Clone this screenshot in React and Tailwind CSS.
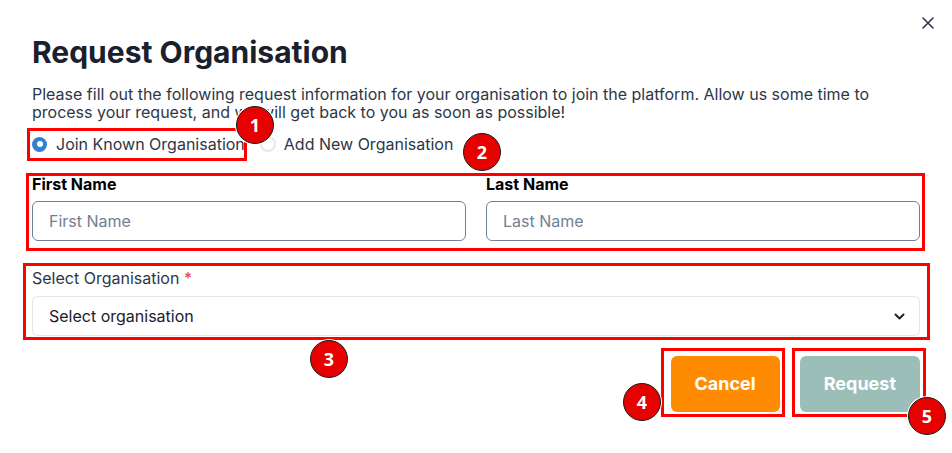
import React, { useState } from 'react';

const marks = [
    { n: 1, box: 'left-[27px] top-[128px] w-[220px] h-[33px]', dot: 'left-[236px] top-[106px]' },
    { n: 2, box: 'left-[26px] top-[173px] w-[899px] h-[78px]', dot: 'left-[463px] top-[133px]' },
    { n: 3, box: 'left-[23px] top-[263px] w-[907px] h-[77px]', dot: 'left-[310px] top-[340px]' },
    { n: 4, box: 'left-[661px] top-[348px] w-[124px] h-[69px]', dot: 'left-[623px] top-[383px]' },
    { n: 5, box: 'left-[792px] top-[348px] w-[134px] h-[69px]', dot: 'left-[908px] top-[397px]' },
]

const App = () => {
    const [mode, setMode] = useState('join')
    const [first, setFirst] = useState('')
    const [last, setLast] = useState('')

    return (
        <div className="relative w-[952px] h-[453px] bg-white overflow-hidden font-['Inter',sans-serif] text-[#1a202c]">
            <button className="absolute top-[14px] right-[15px] p-[3px] text-[#2d3748]">
                <svg width="12" height="12" viewBox="0 0 12 12" fill="none" stroke="currentColor" strokeWidth="1.6" strokeLinecap="round">
                    <path d="M1 1l10 10M11 1L1 11" />
                </svg>
            </button>

            <div className="px-8 pt-[34px]">
                <h1 className="text-[30px] leading-9 font-bold text-[#1a202c]">Request Organisation</h1>
                <p className="mt-[15px] text-base leading-[18px] text-[#2d3748]">
                    Please fill out the following request information for your organisation to join the platform. Allow us some time to process your request, and we will get back to you as soon as possible!
                </p>

                {/* radio group */}
                <div className="mt-[11px] flex items-center gap-[15px] h-6">
                    <label className="flex items-center gap-[9px] cursor-pointer" onClick={() => setMode('join')}>
                        <span className={mode === 'join'
                            ? 'w-[15px] h-[15px] rounded-full bg-[#3182ce] flex items-center justify-center'
                            : 'w-[16px] h-[16px] rounded-full border-2 border-[#e2e8f0]'}>
                            {mode === 'join' && <span className="w-[6px] h-[6px] rounded-full bg-white" />}
                        </span>
                        <span className="text-base leading-6 text-[#2d3748]">Join Known Organisation</span>
                    </label>
                    <label className="flex items-center gap-[8px] cursor-pointer" onClick={() => setMode('add')}>
                        <span className={mode === 'add'
                            ? 'w-[15px] h-[15px] rounded-full bg-[#3182ce] flex items-center justify-center'
                            : 'w-[16px] h-[16px] rounded-full border-2 border-[#e2e8f0]'}>
                            {mode === 'add' && <span className="w-[6px] h-[6px] rounded-full bg-white" />}
                        </span>
                        <span className="text-base leading-6 text-[#2d3748]">Add New Organisation</span>
                    </label>
                </div>

                <div className="mt-4 grid grid-cols-2 gap-5">
                    <div>
                        <label className="block text-base leading-6 font-bold text-black">First Name</label>
                        <input value={first} onChange={e => setFirst(e.target.value)} placeholder="First Name"
                            className="mt-[5px] w-full h-10 px-4 rounded-md border border-[#718096] text-base outline-none placeholder:text-[#718096]" />
                    </div>
                    <div>
                        <label className="block text-base leading-6 font-bold text-black">Last Name</label>
                        <input value={last} onChange={e => setLast(e.target.value)} placeholder="Last Name"
                            className="mt-[5px] w-full h-10 px-4 rounded-md border border-[#718096] text-base outline-none placeholder:text-[#718096]" />
                    </div>
                </div>

                <div className="mt-[25px]">
                    <label className="block text-base leading-6 text-[#2d3748]">
                        Select Organisation <span className="text-[#e53e3e]">*</span>
                    </label>
                    <div className="mt-[6px] h-10 rounded-md border border-[#e2e8f0] flex items-center justify-between pl-4 pr-[14px]">
                        <span className="text-base text-[#1a202c]">Select organisation</span>
                        <svg width="11" height="7" viewBox="0 0 11 7" fill="none" stroke="#1a202c" strokeWidth="2" strokeLinecap="round" strokeLinejoin="round">
                            <path d="M1.5 1.5l4 4 4-4" />
                        </svg>
                    </div>
                </div>

                <div className="mt-5 flex justify-end gap-5">
                    <button className="h-14 px-6 rounded-md bg-[#ff8c00] text-white text-lg font-bold">Cancel</button>
                    <button disabled className="h-14 px-6 rounded-md bg-[#9bbfb8] text-white text-lg font-bold">Request</button>
                </div>
            </div>

            {/* annotation overlays */}
            {marks.map(m => (
                <div key={'b' + m.n} className={'absolute border-[3px] border-[#ff0000] pointer-events-none ' + m.box} />
            ))}
            {marks.map(m => (
                <div key={'d' + m.n} className={'absolute w-[38px] h-[38px] rounded-full bg-[#e60000] border border-[#1a1a1a] ring-1 ring-white flex items-center justify-center text-white text-[18px] font-bold font-["Open_Sans",sans-serif] ' + m.dot}>
                    {m.n}
                </div>
            ))}
        </div>
    )
}

export default App
